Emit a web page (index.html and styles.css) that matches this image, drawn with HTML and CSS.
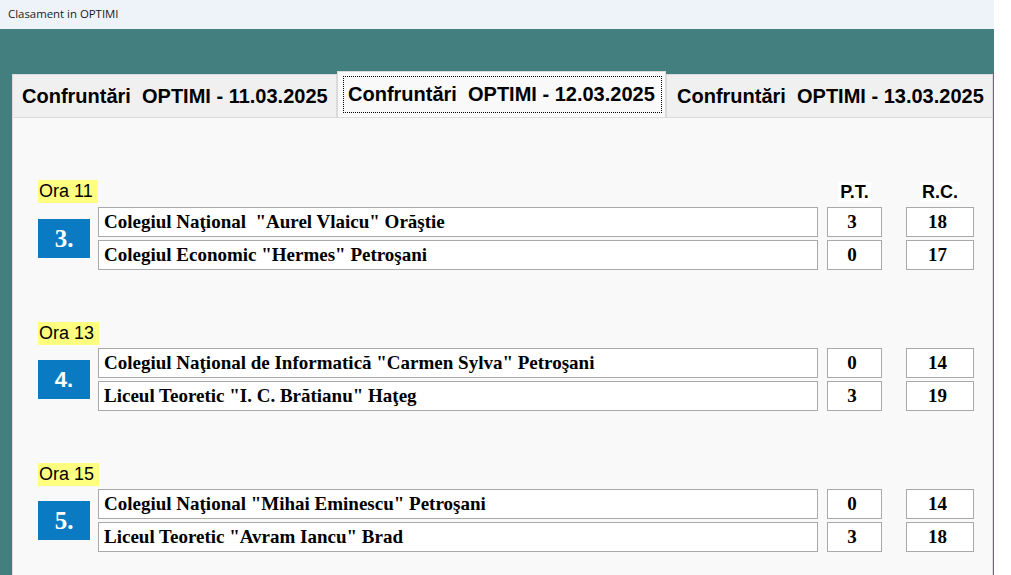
FILE: index.html
```html
<!DOCTYPE html>
<html lang="ro">
<head>
  <meta charset="UTF-8">
  <title>Clasament in OPTIMI</title>
  <link rel="stylesheet" href="styles.css">
</head>
<body>

  <div class="window">
    <div class="titlebar">Clasament in OPTIMI</div>

    <div class="client">
      <!-- Tab headers -->
      <div class="tabs">
        <div class="tab tab-first">Confruntări&nbsp; OPTIMI - 11.03.2025</div>
        <div class="tab tab-active"><span class="focus">Confruntări&nbsp; OPTIMI - 12.03.2025</span></div>
        <div class="tab tab-last">Confruntări&nbsp; OPTIMI - 13.03.2025</div>
      </div>

      <!-- Tab page for 12.03.2025 -->
      <div class="page">

        <div class="match">
          <div class="match-head">
            <div class="hour-cell"><span class="hour">Ora 11</span></div>
            <div class="col-head col-pt"><span>P.T.</span></div>
            <div class="col-head col-rc"><span>R.C.</span></div>
          </div>
          <div class="match-body">
            <div class="num">3.</div>
            <div class="teams">
              <div class="team">
                <div class="name">Colegiul Naţional&nbsp; "Aurel Vlaicu" Orăştie</div>
                <div class="score col-pt">3</div>
                <div class="score col-rc">18</div>
              </div>
              <div class="team">
                <div class="name">Colegiul Economic "Hermes" Petroşani</div>
                <div class="score col-pt">0</div>
                <div class="score col-rc">17</div>
              </div>
            </div>
          </div>
        </div>

        <div class="match">
          <div class="match-head">
            <div class="hour-cell"><span class="hour">Ora 13</span></div>
          </div>
          <div class="match-body">
            <div class="num num-sans">4.</div>
            <div class="teams">
              <div class="team">
                <div class="name">Colegiul Naţional de Informatică "Carmen Sylva" Petroşani</div>
                <div class="score col-pt">0</div>
                <div class="score col-rc">14</div>
              </div>
              <div class="team">
                <div class="name">Liceul Teoretic "I. C. Brătianu" Haţeg</div>
                <div class="score col-pt">3</div>
                <div class="score col-rc">19</div>
              </div>
            </div>
          </div>
        </div>

        <div class="match">
          <div class="match-head">
            <div class="hour-cell"><span class="hour">Ora 15</span></div>
          </div>
          <div class="match-body">
            <div class="num">5.</div>
            <div class="teams">
              <div class="team">
                <div class="name">Colegiul Naţional "Mihai Eminescu" Petroşani</div>
                <div class="score col-pt">0</div>
                <div class="score col-rc">14</div>
              </div>
              <div class="team">
                <div class="name">Liceul Teoretic "Avram Iancu" Brad</div>
                <div class="score col-pt">3</div>
                <div class="score col-rc">18</div>
              </div>
            </div>
          </div>
        </div>

      </div>
    </div>
  </div>

</body>
</html>
```

FILE: styles.css
```css
body {
  margin: 0;
  background-color: #ffffff;
  font-family: "Liberation Sans", Arial, sans-serif;
}
.window {
  width: 994px;
  height: 575px;
  background-color: #427f7e;
  overflow: hidden;
}
.titlebar {
  height: 29px;
  line-height: 28px;
  padding-left: 8px;
  background-color: #eef3f9;
  color: #1a1a1a;
  font-family: "Open Sans", "Noto Sans", sans-serif;
  font-size: 11.4px;
}
.client {
  padding: 42px 1px 0 12px;
}
.tabs {
  display: flex;
  align-items: flex-end;
  height: 46px;
}
.tab {
  box-sizing: border-box;
  height: 43px;
  display: flex;
  align-items: center;
  background-color: #f0f0f0;
  border: 1px solid #dadada;
  border-bottom: none;
  color: #000;
  font-weight: bold;
  font-size: 20px;
  white-space: nowrap;
}
.tab-first {
  width: 325px;
  padding-left: 9px;
}
.tab-active {
  width: 329px;
  height: 46px;
  padding: 4px 3px 4px 5px;
  background-color: #f9f9f9;
}
.tab-active .focus {
  display: flex;
  align-items: center;
  width: 100%;
  height: 100%;
  box-sizing: border-box;
  padding-left: 4px;
  border: 1px dotted #000;
}
.tab-last {
  width: 327px;
  padding-left: 10px;
}
.page {
  height: 460px;
  background-color: #f9f9f9;
  border: 1px solid #dcdcdc;
  padding: 62px 0 0 25px;
}
.match {
  margin-bottom: 52px;
}
.match-head {
  display: flex;
  height: 23px;
}
.hour-cell {
  width: 789px;
}
.hour {
  display: inline-block;
  height: 23px;
  line-height: 23px;
  padding: 0 5px 0 1px;
  background-color: #ffff80;
  font-size: 18px;
}
.col-head {
  text-align: center;
  padding-top: 2px;
  font-weight: bold;
  font-size: 18px;
  line-height: 20px;
}
.col-head span {
  background-color: #ffffff;
  padding: 0 2px;
}
.col-pt {
  width: 55px;
  margin-left: 9px;
}
.col-head.col-pt {
  margin-left: 0;
}
.col-rc {
  width: 68px;
  margin-left: 24px;
}
.match-body {
  display: flex;
  align-items: center;
  margin-top: 4px;
}
.match + .match .match-body {
  margin-top: 3px;
}
.num {
  width: 52px;
  height: 39px;
  margin-right: 8px;
  background-color: #0a7bc3;
  color: #ffffff;
  font-family: "Liberation Serif", "Times New Roman", serif;
  font-weight: bold;
  font-size: 25px;
  line-height: 39px;
  text-align: center;
}
.num-sans {
  font-family: "Liberation Sans", Arial, sans-serif;
  font-size: 22px;
}
.teams {
  display: flex;
  flex-direction: column;
  gap: 3px;
}
.team {
  display: flex;
}
.name,
.score {
  box-sizing: border-box;
  height: 30px;
  line-height: 28px;
  background-color: #ffffff;
  border: 1px solid #a9a9a9;
  font-family: "Liberation Serif", "Times New Roman", serif;
  font-weight: bold;
  font-size: 19px;
  white-space: nowrap;
}
.name {
  width: 720px;
  padding-left: 5px;
}
.score {
  text-align: center;
  padding-right: 5px;
}
```
